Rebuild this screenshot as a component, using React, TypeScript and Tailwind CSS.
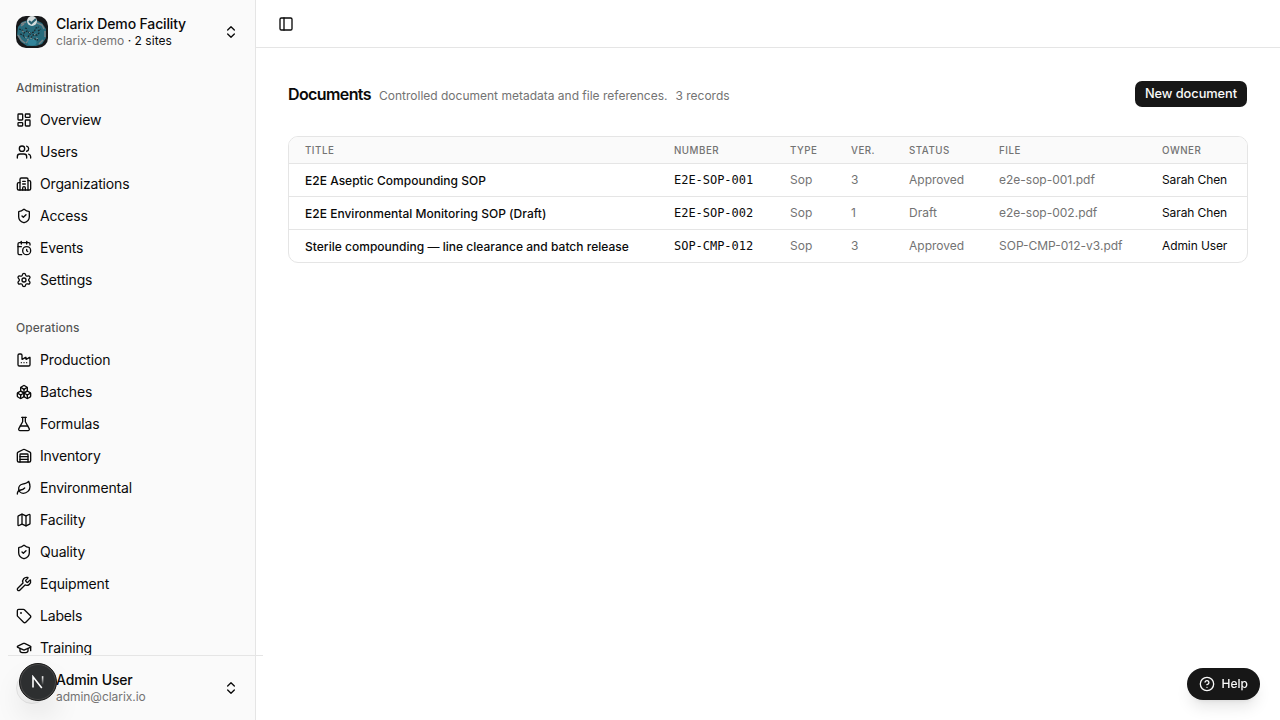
import {
  Boxes,
  Building2,
  CalendarClock,
  ChevronsUpDown,
  CircleHelp,
  Factory,
  FlaskConical,
  GraduationCap,
  LayoutDashboard,
  Leaf,
  Map,
  PanelLeft,
  Settings,
  ShieldCheck,
  Tag,
  Users,
  Warehouse,
  Wrench,
  type LucideIcon,
} from "lucide-react";

type NavItem = {
  label: string;
  icon: LucideIcon;
};

type Doc = {
  title: string;
  number: string;
  type: string;
  version: number;
  status: string;
  file: string;
  owner: string;
};

const administration: NavItem[] = [
  { label: "Overview", icon: LayoutDashboard },
  { label: "Users", icon: Users },
  { label: "Organizations", icon: Building2 },
  { label: "Access", icon: ShieldCheck },
  { label: "Events", icon: CalendarClock },
  { label: "Settings", icon: Settings },
];

const operations: NavItem[] = [
  { label: "Production", icon: Factory },
  { label: "Batches", icon: Boxes },
  { label: "Formulas", icon: FlaskConical },
  { label: "Inventory", icon: Warehouse },
  { label: "Environmental", icon: Leaf },
  { label: "Facility", icon: Map },
  { label: "Quality", icon: ShieldCheck },
  { label: "Equipment", icon: Wrench },
  { label: "Labels", icon: Tag },
  { label: "Training", icon: GraduationCap },
];

const documents: Doc[] = [
  {
    title: "E2E Aseptic Compounding SOP",
    number: "E2E-SOP-001",
    type: "Sop",
    version: 3,
    status: "Approved",
    file: "e2e-sop-001.pdf",
    owner: "Sarah Chen",
  },
  {
    title: "E2E Environmental Monitoring SOP (Draft)",
    number: "E2E-SOP-002",
    type: "Sop",
    version: 1,
    status: "Draft",
    file: "e2e-sop-002.pdf",
    owner: "Sarah Chen",
  },
  {
    title: "Sterile compounding — line clearance and batch release",
    number: "SOP-CMP-012",
    type: "Sop",
    version: 3,
    status: "Approved",
    file: "SOP-CMP-012-v3.pdf",
    owner: "Admin User",
  },
];

const columns = [
  { label: "Title", width: "w-[369px]" },
  { label: "Number", width: "w-[116px]" },
  { label: "Type", width: "w-[61px]" },
  { label: "Ver.", width: "w-[58px]" },
  { label: "Status", width: "w-[90px]" },
  { label: "File", width: "w-[163px]" },
  { label: "Owner", width: "w-[101px]" },
];

function OrgLogo() {
  return (
    <svg viewBox="0 0 32 32" className="size-8 shrink-0 rounded-[10px]">
      <rect width="32" height="32" fill="#17181a" />
      <path
        d="M2 11L6 6l6-2h8l6 3 4 6v9l-4 6-6 2h-9l-6-4-4-7z"
        fill="#286b7c"
      />
      {/* grey highlights round the rim */}
      <path
        d="M5 8l5-2M5 10l3-2M21 7l5 2 2 4M29 15v6M2 19l3 5 4 3M27 24l-4 4M10 27l3-3"
        stroke="#788387"
        strokeWidth="1.5"
        fill="none"
      />
      <path
        d="M3 13l3 1 2 3 3-2 3 2M4 18l3 1 2 3M12 21l3-4 3-1 2-4 3-1M15 22l2-3 4 0 3-3M22 15l3-2M18 23l4 1M9 12l3 1"
        stroke="#1c2b31"
        strokeWidth="1.3"
        fill="none"
        strokeDasharray="2 1"
      />
      <path
        d="M6 15l2 1M13 16l2 2M18 19l3-2M11 24l4-2 5 3M9 21l2 1M20 22l3 1"
        stroke="#8b9697"
        strokeWidth="1"
        fill="none"
        strokeDasharray="2 1.5"
      />
      <ellipse cx="16" cy="26.5" rx="4.5" ry="3" fill="#32849a" />
      <circle cx="16" cy="5" r="5" fill="#d5dcdd" />
      <path d="M13 5l2.3 2.3L20 3" stroke="#27606f" strokeWidth="2" fill="none" />
    </svg>
  );
}

function NavGroup({ title, items }: { title: string; items: NavItem[] }) {
  return (
    <div className="flex flex-col p-2">
      <div className="flex h-8 items-center px-2 text-xs font-medium tracking-[0.05px] text-[#0a0a0a]/70">
        {title}
      </div>
      <ul className="flex flex-col">
        {items.map((item) => (
          <li
            key={item.label}
            className="flex h-8 items-center gap-2 px-2 text-sm tracking-[-0.16px]"
          >
            <item.icon className="size-4 shrink-0" />
            <span>{item.label}</span>
          </li>
        ))}
      </ul>
    </div>
  );
}

function DevBadge() {
  return (
    <div className="absolute top-[7px] left-[19px] flex size-[38px] items-center justify-center rounded-full border border-[#171717] bg-[#2d2f30] shadow-[inset_0_0_0_1px_#4a4a4a,0_16px_32px_-8px_rgba(0,0,0,0.24)]">
      <svg width="14" height="14" viewBox="0 0 14 14" fill="none">
        <defs>
          <linearGradient id="stem" x1="0" y1="1" x2="0" y2="10" gradientUnits="userSpaceOnUse">
            <stop stopColor="white" />
            <stop offset="1" stopColor="white" stopOpacity="0" />
          </linearGradient>
        </defs>
        <path d="M2 12.5V1.8L10.8 13" stroke="white" strokeWidth="1.6" />
        <path d="M11.6 1.2V10" stroke="url(#stem)" strokeWidth="1.6" />
      </svg>
    </div>
  );
}

function Sidebar() {
  return (
    <aside className="flex h-full w-64 shrink-0 flex-col border-r border-[#e5e5e5] bg-[#fafafa]">
      <div className="flex h-16 shrink-0 items-center gap-2 px-4">
        <OrgLogo />
        <div className="flex-1">
          <div className="text-sm leading-[17.5px] font-medium tracking-[-0.15px]">
            Clarix Demo Facility
          </div>
          <div className="text-xs leading-4 tracking-[0.03px]">
            <span className="text-[#737373]">clarix-demo</span> · 2 sites
          </div>
        </div>
        <ChevronsUpDown className="size-4" />
      </div>
      <nav className="min-h-0 flex-1 overflow-hidden">
        <NavGroup title="Administration" items={administration} />
        <NavGroup title="Operations" items={operations} />
      </nav>
      <div className="relative mr-[-8px] ml-2 flex h-[65px] shrink-0 items-center gap-2 border-t border-[#e5e5e5] pr-6 pl-2">
        <div className="size-8 rounded-full border border-[#e5e5e5] bg-[#f5f5f5]" />
        <div className="flex-1">
          <div className="text-sm leading-[17.5px] font-medium tracking-[-0.15px]">
            Admin User
          </div>
          <div className="text-xs leading-4 tracking-[-0.05px] text-[#737373]">
            admin@clarix.io
          </div>
        </div>
        <ChevronsUpDown className="size-4" />
        <div className="absolute inset-y-0 -left-2">
          <DevBadge />
        </div>
      </div>
    </aside>
  );
}

function DocumentsTable() {
  return (
    <div className="overflow-hidden rounded-[10px] border border-[#e5e5e5]">
      <table className="w-full table-fixed border-separate border-spacing-0 text-left text-xs">
        <thead>
          <tr className="h-[27px] bg-[#fafafa]">
            {columns.map((col) => (
              <th
                key={col.label}
                className={`${col.width} border-b border-[#e5e5e5] px-4 py-0 text-[9.75px] font-medium tracking-[0.5px] text-[#737373] uppercase`}
              >
                {col.label}
              </th>
            ))}
          </tr>
        </thead>
        <tbody className="[&>tr:not(:last-child)>td]:border-b [&>tr>td]:border-[#e5e5e5] [&>tr>td]:px-4 [&>tr>td]:whitespace-nowrap">
          {documents.map((doc) => (
            <tr key={doc.number} className="h-[33px] last:h-8">
              <td className="pt-0.5 font-medium tracking-[0.02px]">{doc.title}</td>
              <td className="pb-px font-['DejaVu_Sans_Mono',monospace] tracking-[-0.03px]">
                {doc.number}
              </td>
              <td className="pb-px text-[#737373]">{doc.type}</td>
              <td className="pb-px text-[#737373]">{doc.version}</td>
              <td className="pb-px text-[#737373]">{doc.status}</td>
              <td className="pb-px text-[#737373]">{doc.file}</td>
              <td className="pb-px tracking-[-0.1px]">{doc.owner}</td>
            </tr>
          ))}
        </tbody>
      </table>
    </div>
  );
}

export default function App() {
  return (
    <div className="flex h-screen w-full overflow-hidden bg-white font-['Inter',sans-serif] text-[#0a0a0a]">
      <Sidebar />
      <main className="flex min-w-0 flex-1 flex-col">
        <header className="flex h-12 shrink-0 items-center border-b border-[#e5e5e5] px-[22px]">
          <PanelLeft className="size-4" />
        </header>
        <div className="flex flex-col gap-7 px-8 pt-8">
          <div className="flex h-7 items-center justify-between pr-px">
            <div className="flex items-baseline gap-2">
              <h1 className="text-base font-semibold tracking-[-0.6px]">
                Documents
              </h1>
              <p className="text-xs text-[#737373]">
                Controlled document metadata and file references.
              </p>
              <span className="text-xs text-[#737373]">3 records</span>
            </div>
            <button className="h-[26px] w-28 rounded-[7px] bg-[#171717] text-[0.8rem] font-medium tracking-[-0.05px] text-[#fafafa]">
              New document
            </button>
          </div>
          <DocumentsTable />
        </div>
      </main>
      <button className="fixed right-5 bottom-5 flex h-8 items-center gap-[7px] rounded-full bg-[#171717] px-3 text-xs font-medium text-[#fafafa] shadow-lg">
        <CircleHelp className="size-4" />
        Help
      </button>
    </div>
  );
}
